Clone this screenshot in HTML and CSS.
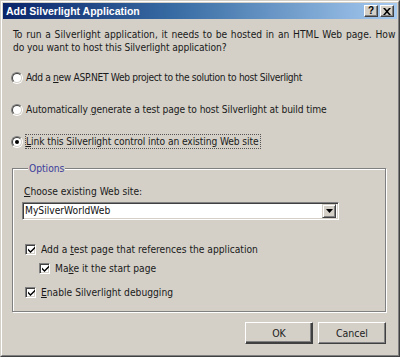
FILE: index.html
```html
<!DOCTYPE html>
<html lang="en">
<head>
<meta charset="utf-8">
<title>Add Silverlight Application</title>
<link rel="stylesheet" href="styles.css">
</head>
<body>
<div class="window">
  <div class="frame">
    <div class="titlebar">
      <span class="title">Add Silverlight Application</span>
      <div class="tb-buttons">
        <span class="tb-btn">?</span>
        <span class="tb-btn"><svg width="8" height="7" viewBox="0 0 8 7"><path d="M0 0h2l2 2.3 2-2.3h2l-3 3.5 3 3.5h-2l-2-2.3-2 2.3h-2l3-3.5z" fill="#000"/></svg></span>
      </div>
    </div>
    <div class="content">
      <p class="intro"><span class="line1">To run a Silverlight application, it needs to be hosted in an HTML Web page. How</span><br><span class="line2">do you want to host this Silverlight application?</span></p>
      <div class="choices">
        <div class="choice"><span class="radio"></span><span class="choice-text tight">Add a <u>n</u>ew ASP.NET Web project to the solution to host Silverlight</span></div>
        <div class="choice"><span class="radio"></span><span class="choice-text snug">Automatically <u>g</u>enerate a test page to host Silverlight at build time</span></div>
        <div class="choice"><span class="radio checked"></span><span class="choice-text snug focus"><u>L</u>ink this Silverlight control into an existing Web site</span></div>
      </div>
      <fieldset class="options">
        <legend>Options</legend>
        <div class="field-label"><u>C</u>hoose existing Web site:</div>
        <div class="combo">
          <span class="combo-value">MySilverWorldWeb</span>
          <span class="combo-btn"><svg width="7" height="4" viewBox="0 0 7 4"><path d="M0 0h7l-3.5 4z" fill="#000"/></svg></span>
        </div>
        <div class="checks">
          <div class="check"><span class="box"><svg width="7" height="7" viewBox="0 0 7 7"><path d="M0 2.5l2.5 2.5 4.5-4.5v2l-4.5 4.5-2.5-2.5z" fill="#000"/></svg></span><span>Add a <u>t</u>est page that references the application</span></div>
          <div class="check sub"><span class="box"><svg width="7" height="7" viewBox="0 0 7 7"><path d="M0 2.5l2.5 2.5 4.5-4.5v2l-4.5 4.5-2.5-2.5z" fill="#000"/></svg></span><span>Ma<u>k</u>e it the start page</span></div>
          <div class="check last"><span class="box"><svg width="7" height="7" viewBox="0 0 7 7"><path d="M0 2.5l2.5 2.5 4.5-4.5v2l-4.5 4.5-2.5-2.5z" fill="#000"/></svg></span><span><u>E</u>nable Silverlight debugging</span></div>
        </div>
      </fieldset>
      <div class="actions">
        <button class="btn default">OK</button>
        <button class="btn">Cancel</button>
      </div>
    </div>
  </div>
</div>
</body>
</html>
```

FILE: styles.css
```css
* { box-sizing: border-box; }
html, body { margin: 0; padding: 0; }
body {
  width: 400px;
  height: 357px;
  background: #d4d0c8;
  font-family: "DejaVu Sans Condensed", "Liberation Sans", Arial, sans-serif;
  font-size: 10.2px;
  color: #1a1a1a;
  overflow: hidden;
}
u { text-decoration: underline; text-underline-offset: 1px; }

.window {
  width: 400px;
  height: 357px;
  border: 1px solid;
  border-color: #d4d0c8 #404040 #404040 #d4d0c8;
}
.frame {
  height: 100%;
  border: 1px solid;
  border-color: #ffffff #808080 #808080 #ffffff;
  padding: 1px;
  display: flex;
  flex-direction: column;
}

.titlebar {
  height: 16px;
  background: linear-gradient(to right, #0a246a 0%, #3a6ea5 45%, #a6caf0 100%);
  display: flex;
  align-items: center;
  justify-content: space-between;
  padding: 0 3px 0 2px;
}
.title {
  color: #fff;
  font-family: "Liberation Sans", Arial, sans-serif;
  font-weight: bold;
  font-size: 10.5px;
  padding-left: 1px;
}
.tb-buttons { display: flex; gap: 2px; }
.tb-btn {
  width: 14px;
  height: 12px;
  background: #d4d0c8;
  border: 1px solid;
  border-color: #ffffff #404040 #404040 #ffffff;
  box-shadow: inset -1px -1px 0 #808080;
  display: flex;
  align-items: center;
  justify-content: center;
  font-family: "Liberation Sans", Arial, sans-serif;
  font-weight: bold;
  font-size: 10px;
  line-height: 1;
  color: #000;
}

.content {
  flex: 1;
  padding: 0 11px 0 9px;
  display: flex;
  flex-direction: column;
}
.intro {
  margin: 9px 0 0 1px;
  line-height: 13px;
  white-space: nowrap;
}
.line1 { word-spacing: 0.8px; }
.line2 { letter-spacing: -0.1px; }

.choices {
  margin-top: 16px;
  display: flex;
  flex-direction: column;
  gap: 17px;
}
.choice {
  height: 15px;
  display: flex;
  align-items: center;
  margin-left: -1px;
}
.radio {
  position: relative;
  width: 12px;
  height: 12px;
  border-radius: 50%;
  border: 1px solid;
  border-color: #808080 #ffffff #ffffff #808080;
  margin-right: 2px;
  flex: none;
}
.radio::before {
  content: "";
  position: absolute;
  inset: 0;
  border-radius: 50%;
  border: 1px solid;
  border-color: #404040 #d4d0c8 #d4d0c8 #404040;
  background: #fff;
}
.radio.checked::after {
  content: "";
  position: absolute;
  left: 3px;
  top: 3px;
  width: 4px;
  height: 4px;
  border-radius: 50%;
  background: #000;
}
.choice-text {
  border: 1px dotted transparent;
  padding: 0 1px 0 0;
  line-height: 13px;
  white-space: nowrap;
}
.choice-text.tight { letter-spacing: -0.35px; }
.choice-text.snug { letter-spacing: -0.1px; }
.choice-text.focus { border-color: #555; }

.options {
  margin: 13px 0 0 0;
  padding: 10px 0 11px 9px;
  border: 1px solid #808080;
  box-shadow: inset 1px 1px 0 #ffffff, 1px 1px 0 #ffffff;
  min-inline-size: 0;
}
.options legend {
  margin-left: 6px;
  padding: 0 1px;
  background: #d4d0c8;
  color: #3c3c9a;
  line-height: 13px;
}
.field-label {
  margin-left: 2px;
  line-height: 13px;
}
.combo {
  margin-top: 4px;
  width: 317px;
  height: 18px;
  background: #fff;
  border: 1px solid;
  border-color: #808080 #ffffff #ffffff #808080;
  box-shadow: inset 1px 1px 0 #404040, inset -1px -1px 0 #d4d0c8;
  display: flex;
  align-items: center;
  padding: 2px;
}
.combo-value {
  flex: 1;
  line-height: 12px;
  color: #111;
}
.combo-btn {
  width: 14px;
  height: 14px;
  background: #d4d0c8;
  border: 1px solid;
  border-color: #d4d0c8 #404040 #404040 #d4d0c8;
  box-shadow: inset 1px 1px 0 #ffffff, inset -1px -1px 0 #808080;
  display: flex;
  align-items: center;
  justify-content: center;
}

.checks {
  margin-top: 22px;
  display: flex;
  flex-direction: column;
  gap: 4px;
}
.check {
  height: 15px;
  display: flex;
  align-items: center;
  gap: 5px;
  margin-left: 3px;
  white-space: nowrap;
}
.check.sub { margin-left: 17px; }
.check.last { margin-top: 5px; }
.box {
  width: 11px;
  height: 11px;
  flex: none;
  background: #fff;
  border: 1px solid;
  border-color: #808080 #ffffff #ffffff #808080;
  box-shadow: inset 1px 1px 0 #404040, inset -1px -1px 0 #d4d0c8;
  display: flex;
  align-items: center;
  justify-content: center;
}
.box svg { margin: 0 0 0 1px; }

.actions {
  margin-top: 10px;
  display: flex;
  justify-content: flex-end;
  gap: 5px;
}
.btn {
  width: 68px;
  height: 22px;
  margin: 0;
  padding: 0;
  font-family: inherit;
  font-size: 10.5px;
  color: #222;
  background: #d4d0c8;
  border: 1px solid;
  border-color: #ffffff #404040 #404040 #ffffff;
  box-shadow: inset -1px -1px 0 #808080;
}
.btn.default {
  box-shadow: inset -1px -1px 0 #404040, inset -2px -2px 0 #808080;
}
```
